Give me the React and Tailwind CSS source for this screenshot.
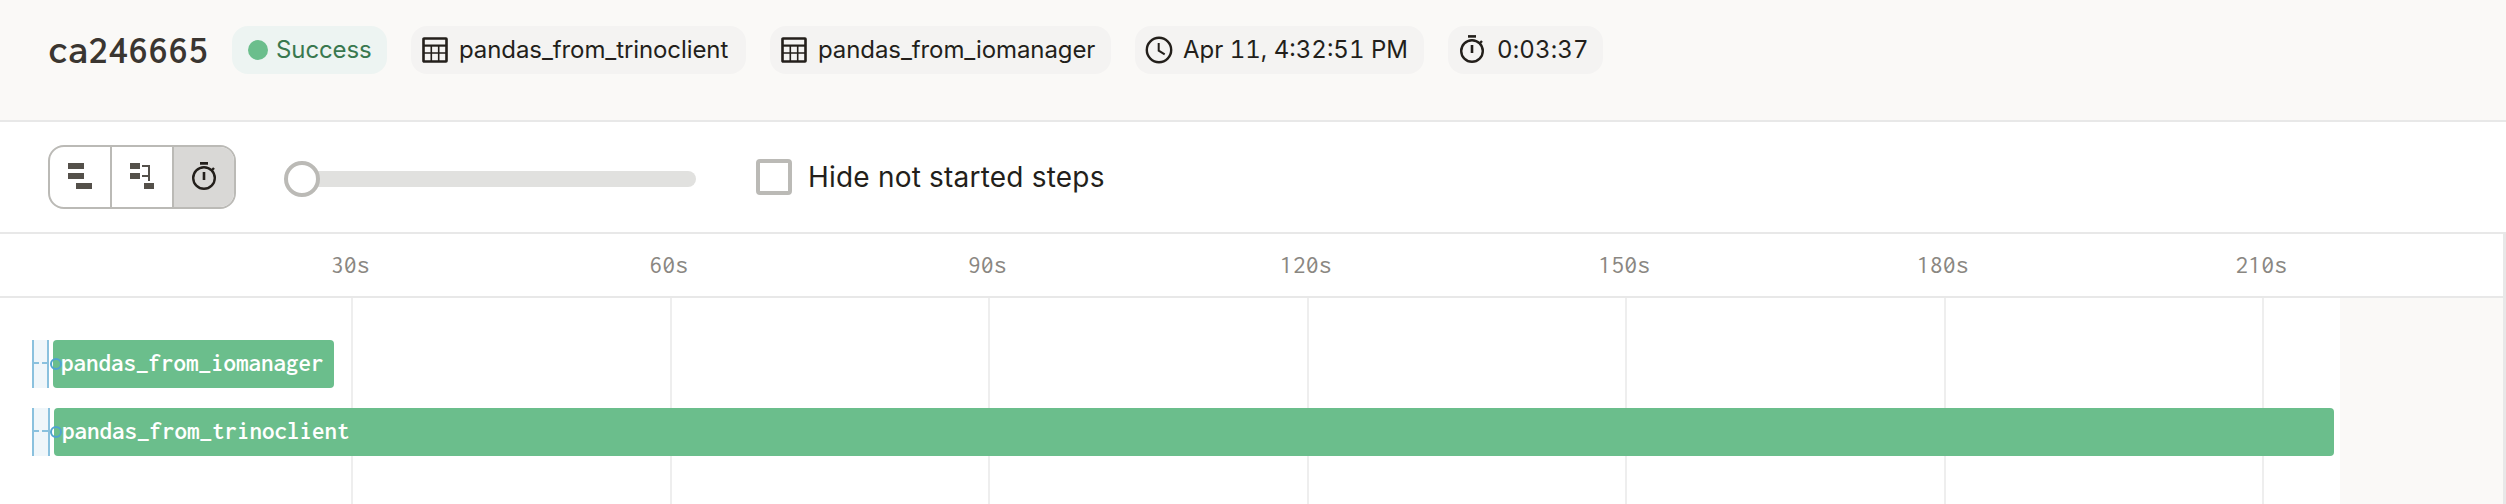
const ink = '#231f1b';

function TableIcon() {
  return (
    <svg className="h-[26px] w-[26px] shrink-0" viewBox="0 0 26 26" fill="none" stroke={ink}>
      <rect x="1.5" y="1.5" width="23" height="23" rx="0.5" strokeWidth="2.6" />
      <path d="M2 8.6H24" strokeWidth="2.2" />
      <path d="M2 16H24M9.3 9V24M16.7 9V24" strokeWidth="1.6" />
    </svg>
  );
}

function ClockIcon() {
  return (
    <svg className="h-[28px] w-[28px] shrink-0" viewBox="0 0 28 28" fill="none" stroke={ink}>
      <circle cx="14" cy="14" r="12.2" strokeWidth="2.4" />
      <path d="M13.7 7V14.7L19.7 18.4" strokeWidth="2" />
    </svg>
  );
}

function TimerIcon() {
  return (
    <svg className="mb-[2px] h-[28px] w-[26px] shrink-0" viewBox="0 0 26 28" fill="none" stroke={ink}>
      <circle cx="13" cy="16" r="10.8" strokeWidth="2.4" />
      <path d="M9 1.4H17" strokeWidth="2.6" />
      <path d="M13 10V18" strokeWidth="2.6" />
      <path d="M20.2 8.8L23 6" strokeWidth="2.4" />
    </svg>
  );
}

function FlatIcon() {
  return (
    <svg className="mb-[2px] h-[26px] w-[24px]" viewBox="0 0 24 26" fill="#54504a">
      <path d="M0 0H16V6H0zM0 10H16V16H0zM8 20H24V26H8z" />
    </svg>
  );
}

function WaterfallIcon() {
  return (
    <svg className="mb-[2px] h-[26px] w-[24px]" viewBox="0 0 24 26" fill="#54504a">
      <path d="M0 0H10V6H0zM0 10H10V16H0zM14 20H24V26H14z" />
      <path d="M12 3H19V18M12 13H19" fill="none" stroke="#54504a" strokeWidth="2" />
    </svg>
  );
}

function Tag({ width, icon, children, pad = 'pl-[11px] gap-[11px] tracking-[-0.09px]' }) {
  return (
    <div className={`flex h-12 shrink-0 items-center rounded-2xl bg-[#f4f3f2] ${pad} ${width}`}>
      {icon}
      <span>{children}</span>
    </div>
  );
}

function Step({ name, wait, gap, bar }) {
  return (
    <div className="flex h-12">
      <div className={`relative flex h-12 shrink-0 items-center border-x-2 border-[#8ac1de] bg-[#eff6fa] ${wait}`}>
        <span className="mb-[2px] h-[2px] w-[5px] bg-[#8ac1de]" />
        <span className="mb-[2px] ml-[3px] h-[2px] flex-1 bg-[#8ac1de]" />
        <span className="absolute left-[16px] top-[18px] z-10 h-3 w-3 rounded-full border-2 border-[#4fa3cf]" />
      </div>
      <div className={`flex h-12 items-center rounded-[4px] bg-[#6bbe8c] pl-2 font-['Inconsolata','DejaVu_Sans_Mono',monospace] text-[25px] font-semibold text-white ${gap} ${bar}`}>
        <span className="relative z-20 whitespace-nowrap">{name}</span>
      </div>
    </div>
  );
}

const ticks = ['30s', '60s', '90s', '120s', '150s', '180s', '210s'];

export default function App() {
  return (
    <div className="flex h-[504px] w-[2506px] flex-col overflow-hidden bg-white font-['Inter',sans-serif] text-[#231f1b]">
      <header className="flex h-[122px] shrink-0 items-start gap-6 border-b-2 border-[#e8e8e8] bg-[#faf9f7] pl-12 pt-[26px] text-[24px]">
        <h1 className="flex h-12 w-40 items-center whitespace-nowrap font-['Inconsolata','DejaVu_Sans_Mono',monospace] text-[40px] font-semibold leading-none text-[#3a3631]">
          ca246665
        </h1>
        <div className="flex h-12 w-[155px] shrink-0 items-center gap-[8px] rounded-2xl bg-[#edf4f2] pl-4 tracking-[-0.1px] text-[#39784f]">
          <span className="h-5 w-5 rounded-full bg-[#6bbe8c]" />
          <span>Success</span>
        </div>
        <Tag width="w-[335px]" icon={<TableIcon />}>pandas_from_trinoclient</Tag>
        <Tag width="w-[341px]" icon={<TableIcon />}>pandas_from_iomanager</Tag>
        <Tag width="w-[289px]" pad="pl-[10px] gap-[10px] tabular-nums" icon={<ClockIcon />}>Apr 11, 4:32:51 PM</Tag>
        <Tag width="w-[155px]" pad="pl-[11px] gap-[12px] tabular-nums tracking-[0.15px]" icon={<TimerIcon />}>0:03:37</Tag>
      </header>

      <div className="flex h-[112px] shrink-0 items-start border-b-2 border-[#e8e8e8] pl-12 pt-[23px]">
        <div className="flex h-16 w-[188px] divide-x-2 divide-[#bbbab6] overflow-hidden rounded-2xl border-2 border-[#bbbab6]">
          <button className="flex w-[62px] items-center pl-[18px]"><FlatIcon /></button>
          <button className="flex w-[62px] items-center pl-[18px]"><WaterfallIcon /></button>
          <button className="flex flex-1 items-center bg-[#d9d8d6] pl-[17px]"><TimerIcon /></button>
        </div>
        <div className="ml-12 mt-4 flex h-9 w-[412px] items-center">
          <span className="z-10 h-9 w-9 shrink-0 rounded-full border-4 border-[#bbbab6] bg-white" />
          <span className="-ml-1 h-4 flex-1 rounded-r-lg bg-[#e1e1df]" />
        </div>
        <label className="ml-[60px] mt-[14px] flex h-9 items-center gap-4 text-[28px] tracking-[0.2px]">
          <span className="h-9 w-9 rounded-[4px] border-4 border-[#bbbab6]" />
          <span>Hide not started steps</span>
        </label>
      </div>

      <div className="flex flex-1 border-r-[3px] border-[#e8e8e8]">
        <div className="flex flex-1 flex-col">
          <div className="flex h-16 shrink-0 border-b-2 border-[#e8e8e8] pb-[2px] pl-[191px] font-['Inconsolata','DejaVu_Sans_Mono',monospace] text-[26px] text-[#8a8782]">
            {ticks.map((t) => (
              <span key={t} className="flex w-[318.5px] shrink-0 items-center justify-center">{t}</span>
            ))}
          </div>
          <div className="relative flex-1">
            <div className="absolute inset-0 flex pl-[32.5px]">
              {ticks.map((t) => (
                <span key={t} className="w-[318.5px] shrink-0">
                  <span className="ml-auto block h-full w-[2px] translate-x-[2px] bg-[#eeeeee]" />
                </span>
              ))}
              <span className="ml-[78px] flex-1 bg-[#faf9f7]" />
            </div>
            <div className="relative flex flex-col gap-5 pl-8 pt-[42px]">
              <Step name="pandas_from_iomanager" wait="w-[17px]" gap="ml-1" bar="w-[281px]" />
              <Step name="pandas_from_trinoclient" wait="w-[18px]" gap="ml-1" bar="w-[2280px]" />
            </div>
          </div>
        </div>
      </div>
    </div>
  );
}
